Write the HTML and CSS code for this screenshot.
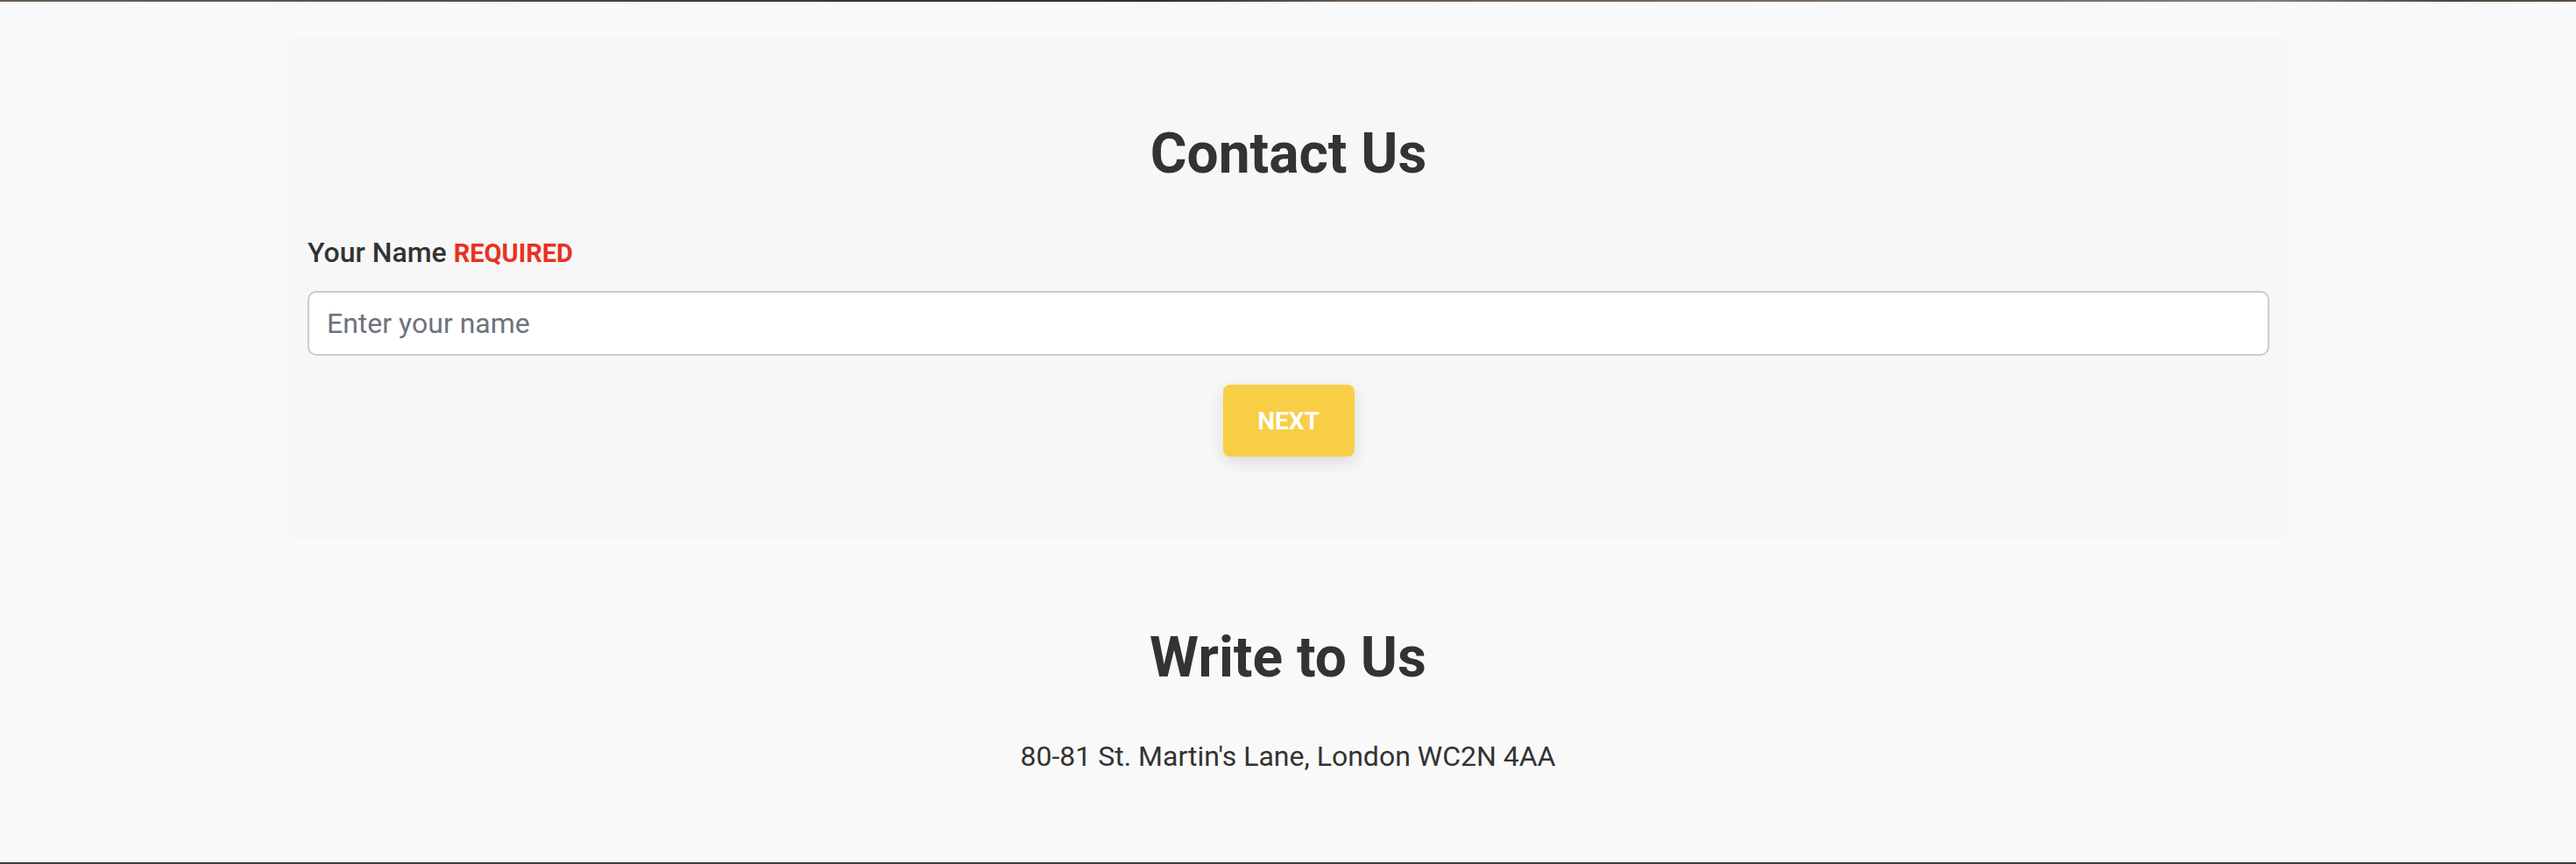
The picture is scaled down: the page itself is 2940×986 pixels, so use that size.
FILE: index.html
```html
<!DOCTYPE html>
<html lang="en">
<head>
<meta charset="utf-8">
<title>Contact Us</title>
<link rel="stylesheet" href="styles.css">
</head>
<body>
<div class="page">
  <div class="topstrip"></div>
  <main class="main">
    <section class="card">
      <h1 class="title">Contact Us</h1>
      <form class="form">
        <label class="label" for="name">Your Name <span class="req">REQUIRED</span></label>
        <input class="input" id="name" type="text" placeholder="Enter your name">
        <div class="actions">
          <button class="btn" type="button">NEXT</button>
        </div>
      </form>
    </section>
    <section class="write">
      <h2 class="title">Write to Us</h2>
      <p class="address">80-81 St. Martin's Lane, London WC2N 4AA</p>
    </section>
  </main>
</div>
</body>
</html>
```
FILE: styles.css
```css
* { box-sizing: border-box; }
html, body { margin: 0; padding: 0; }
body {
  background: #f9f9f9;
  font-family: Roboto, "Liberation Sans", Arial, sans-serif;
  color: #333333;
}
.page {
  height: 986px;
  display: flex;
  flex-direction: column;
  border-bottom: 2px solid #3b3e40;
  overflow: hidden;
}
.topstrip {
  height: 2px;
  flex: none;
  background: linear-gradient(90deg, #6d5e52 0%, #5a524c 15%, #3c3c3e 28%, #2e2e30 45%, #6a5a4e 52%, #7a6a5c 70%, #6e747c 80%, #7c8088 88%, #4e4a3c 95%, #5e4e40 100%);
}
.main {
  flex: 1;
  display: flex;
  flex-direction: column;
  align-items: center;
  padding-top: 39px;
}
.card {
  width: 2280px;
  background: #f7f7f7;
  padding: 96px 20px 95px 21px;
}
.title {
  margin: 0;
  font-size: 64px;
  line-height: 77px;
  font-weight: 700;
  text-align: center;
  color: #333333;
}
.form {
  display: flex;
  flex-direction: column;
  margin-top: 50px;
}
.label {
  font-size: 32px;
  line-height: 48px;
  font-weight: 500;
  color: #333333;
}
.req {
  color: #e8321f;
  font-weight: 700;
  font-size: 29px;
}
.input {
  margin-top: 19px;
  width: 100%;
  height: 74px;
  border: 2px solid #cccccc;
  border-radius: 10px;
  background: #ffffff;
  padding: 0 20px;
  font-family: Roboto, "Liberation Sans", Arial, sans-serif;
  font-size: 32px;
  color: #333333;
  outline: none;
}
.input::placeholder {
  color: #6c737c;
  opacity: 1;
}
.actions {
  display: flex;
  justify-content: center;
  margin-top: 33px;
}
.btn {
  width: 150px;
  height: 82px;
  border: none;
  border-radius: 8px;
  background: #f8ce46;
  color: #ffffff;
  font-family: Roboto, "Liberation Sans", Arial, sans-serif;
  font-size: 28px;
  font-weight: 700;
  box-shadow: 0 6px 18px rgba(0, 0, 0, 0.12);
  cursor: pointer;
}
.write {
  margin-top: 96px;
  text-align: center;
}
.address {
  margin: 50px 0 0;
  font-size: 32px;
  line-height: 48px;
  color: #333333;
}
```
